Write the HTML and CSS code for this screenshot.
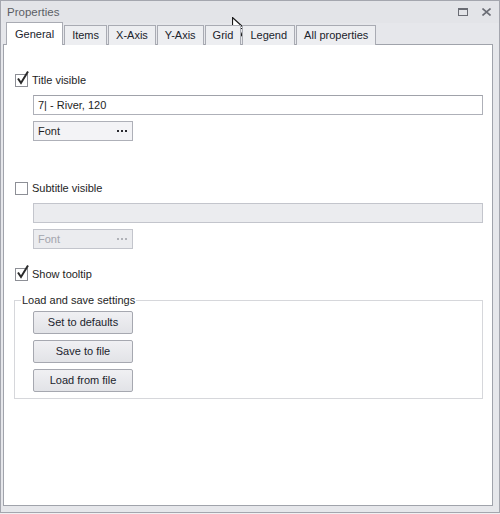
FILE: index.html
```html
<!DOCTYPE html>
<html>
<head>
<meta charset="utf-8">
<link rel="stylesheet" href="styles.css">
</head>
<body>
<div class="window">
  <div class="titlebar">
    <span class="title">Properties</span>
    <div class="title-icons">
      <svg class="ico" width="10" height="8" viewBox="0 0 10 8"><rect x="0.5" y="0.5" width="9" height="7" fill="none" stroke="#6a6c74" stroke-width="1"/><rect x="0" y="0" width="10" height="2" fill="#6a6c74"/></svg>
      <svg class="ico" width="9" height="8" viewBox="0 0 9 8"><path d="M0.5 0.5 L8.5 7.5 M8.5 0.5 L0.5 7.5" stroke="#6a6c74" stroke-width="1.6" fill="none"/></svg>
    </div>
  </div>
  <div class="tabs">
    <div class="tab active">General</div>
    <div class="tab">Items</div>
    <div class="tab">X-Axis</div>
    <div class="tab">Y-Axis</div>
    <div class="tab">Grid</div>
    <div class="tab">Legend</div>
    <div class="tab">All properties</div>
  </div>
  <div class="panel">
    <label class="check first">
      <span class="box"><svg width="15" height="16" viewBox="0 0 15 16"><path d="M3 8.5 L6 13 L13 1.5" stroke="#2a2a2a" stroke-width="2" fill="none"/></svg></span>
      <span>Title visible</span>
    </label>
    <div class="indent">
      <div class="input">7| - River, 120</div>
      <div class="fontbtn"><span>Font</span><span class="dots"><i></i><i></i><i></i></span></div>
    </div>
    <label class="check second">
      <span class="box"></span>
      <span>Subtitle visible</span>
    </label>
    <div class="indent">
      <div class="input disabled"></div>
      <div class="fontbtn disabled"><span>Font</span><span class="dots"><i></i><i></i><i></i></span></div>
    </div>
    <label class="check third">
      <span class="box"><svg width="15" height="16" viewBox="0 0 15 16"><path d="M3 8.5 L6 13 L13 1.5" stroke="#2a2a2a" stroke-width="2" fill="none"/></svg></span>
      <span>Show tooltip</span>
    </label>
    <fieldset class="group">
      <legend>Load and save settings</legend>
      <div class="btn">Set to defaults</div>
      <div class="btn">Save to file</div>
      <div class="btn">Load from file</div>
    </fieldset>
  </div>
  <svg class="cursor" width="15" height="22" viewBox="0 0 15 22"><path d="M0.5 0.5 L0.5 16.5 L4.5 12.5 L7.5 19.5 L10 18.5 L7 11.5 L12.5 11.5 Z" fill="#fff" stroke="#1a1a1a" stroke-width="1.2" stroke-linejoin="miter"/></svg>
</div>
</body>
</html>
```

FILE: styles.css
```css
html, body { margin: 0; padding: 0; }
body {
  width: 500px; height: 514px; overflow: hidden;
  font-family: "Liberation Sans", Arial, sans-serif;
  font-size: 11px; color: #1e1e1e;
  background: #f0f0f2;
}
.window {
  position: relative;
  width: 500px; height: 513px; box-sizing: border-box;
  border: 1px solid #a4a6ae;
  background: #e6e7eb;
  display: flex; flex-direction: column;
  padding: 0 6px 6px 2px;
}
.titlebar {
  height: 22px; display: flex; align-items: center; justify-content: space-between;
  padding: 0 8px 0 4px; margin-right: -6px;
  background: #e3e4e8;
  flex: none;
}
.title { color: #5c5e66; font-size: 11.5px; }
.title-icons { display: flex; gap: 14px; align-items: center; }
.tabs {
  display: flex; align-items: flex-end; gap: 1px;
  height: 22px; padding-left: 3px; flex: none;
  margin-bottom: -1px; position: relative; z-index: 1;
}
.tab {
  height: 20px; box-sizing: border-box;
  border: 1px solid #a9abb3; border-bottom: none;
  background: #edeef1;
  padding: 0 7px; line-height: 19px; color: #20232c;
}
.tab.active {
  height: 23px; background: #fff; padding: 0 8px; line-height: 22px;
  border-color: #a9abb3;
}
.panel {
  flex: 1; background: #fff; border: 1px solid #a0a3ab;
  padding: 0 9px 0 10px;
  display: flex; flex-direction: column;
}
.check { display: flex; align-items: center; gap: 4px; height: 16px; }
.check.first { margin-top: 27px; }
.check.second { margin-top: 39px; }
.check.third { margin-top: 17px; }
.box {
  width: 13px; height: 13px; box-sizing: border-box; position: relative;
  border: 1px solid #8d8f96; background: #fff; margin-left: 1px;
}
.box svg { position: absolute; left: -1px; top: -5px; }
.indent { padding-left: 19px; display: flex; flex-direction: column; gap: 6px; margin-top: 7px; }
.input {
  height: 20px; box-sizing: border-box; border: 1px solid #aeb0b8;
  border-top-color: #a0a2aa;
  padding-left: 4px; line-height: 18px; background: #fff;
}
.input.disabled { background: #ebecef; border-color: #c3c5cc; }
.fontbtn {
  width: 100px; height: 20px; box-sizing: border-box;
  border: 1px solid #aeb0b8; background: #f3f3f6;
  display: flex; align-items: center; justify-content: space-between;
  padding: 0 4px;
}
.fontbtn.disabled { background: #ebecef; border-color: #c3c5cc; color: #a3a5ad; }
.dots { display: flex; gap: 2px; margin-right: 1px; }
.dots i { display: block; width: 2px; height: 2px; background: #2a2a30; }
.fontbtn.disabled .dots i { background: #b0b2b8; }
.group {
  margin: 12px 0 0 0; padding: 5px 0 6px 18px;
  border: 1px solid #d6d7db;
  display: flex; flex-direction: column; gap: 6px;
  min-width: 0;
}
.group legend { padding: 0 1px; margin-left: -12px; color: #1e1e1e; }
.btn {
  width: 100px; height: 23px; box-sizing: border-box;
  border: 1px solid #a6a8b0; border-radius: 2px;
  background: linear-gradient(#f0f0f3, #e2e3e7);
  text-align: center; line-height: 21px; color: #20232c;
}
.cursor { position: absolute; left: 231px; top: 16px; }
```
